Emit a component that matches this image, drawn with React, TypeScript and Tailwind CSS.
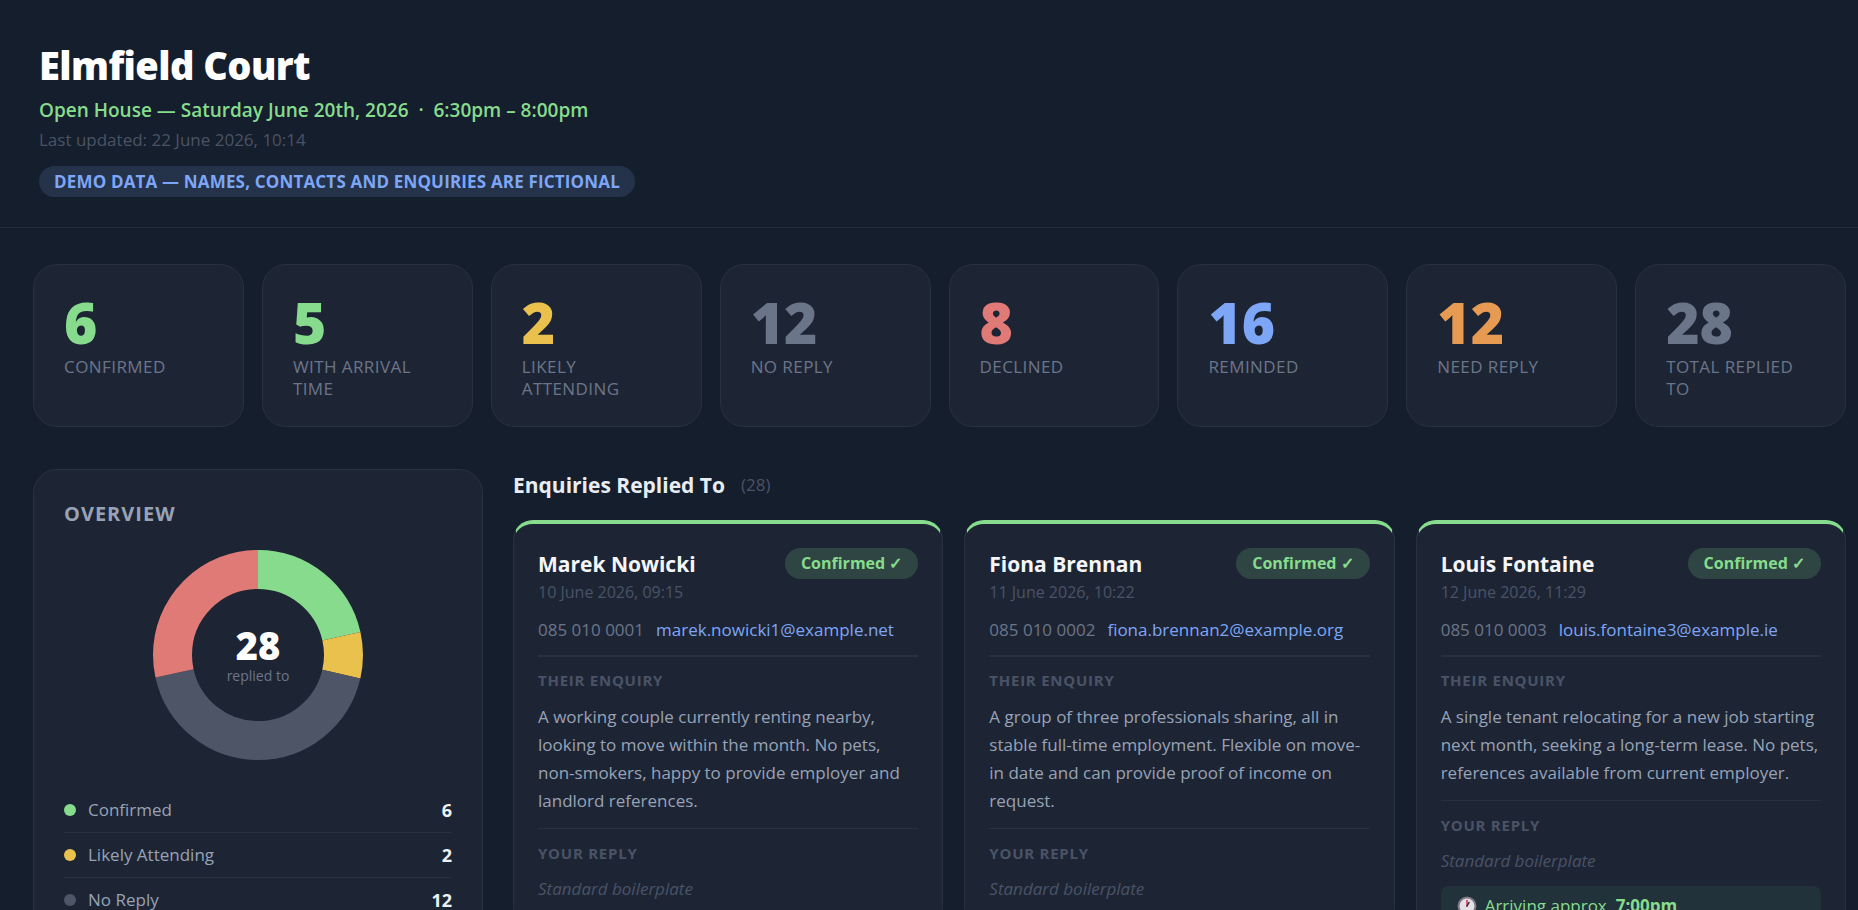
interface Stat {
  value: number;
  label: string;
  color: string;
}

interface Slice {
  label: string;
  count: number;
  color: string;
}

interface Enquiry {
  name: string;
  date: string;
  phone: string;
  email: string;
  message: string;
  arrival?: string;
}

const STATS: Stat[] = [
  { value: 6, label: "Confirmed", color: "text-[#86dc8c]" },
  { value: 5, label: "With arrival time", color: "text-[#86dc8c]" },
  { value: 2, label: "Likely attending", color: "text-[#ebc14e]" },
  { value: 12, label: "No reply", color: "text-[#6b7589]" },
  { value: 8, label: "Declined", color: "text-[#e07a76]" },
  { value: 16, label: "Reminded", color: "text-[#7ea6f6]" },
  { value: 12, label: "Need reply", color: "text-[#e69a52]" },
  { value: 28, label: "Total replied to", color: "text-[#6b7589]" },
];

const SLICES: Slice[] = [
  { label: "Confirmed", count: 6, color: "#86dc8c" },
  { label: "Likely Attending", count: 2, color: "#ebc14e" },
  { label: "No Reply", count: 12, color: "#4e5567" },
  { label: "Declined", count: 8, color: "#e07a76" },
];

const ENQUIRIES: Enquiry[] = [
  {
    name: "Marek Nowicki",
    date: "10 June 2026, 09:15",
    phone: "085 010 0001",
    email: "marek.nowicki1@example.net",
    message:
      "A working couple currently renting nearby, looking to move within the month. No pets, non-smokers, happy to provide employer and landlord references.",
  },
  {
    name: "Fiona Brennan",
    date: "11 June 2026, 10:22",
    phone: "085 010 0002",
    email: "fiona.brennan2@example.org",
    message:
      "A group of three professionals sharing, all in stable full-time employment. Flexible on move-in date and can provide proof of income on request.",
  },
  {
    name: "Louis Fontaine",
    date: "12 June 2026, 11:29",
    phone: "085 010 0003",
    email: "louis.fontaine3@example.ie",
    message:
      "A single tenant relocating for a new job starting next month, seeking a long-term lease. No pets, references available from current employer.",
    arrival: "7:00pm",
  },
];

function StatCard({ stat }: { stat: Stat }) {
  return (
    <div className="rounded-3xl border border-[#283142] bg-[#1d2535] px-[30px] pt-7 pb-[26px]">
      <div className={`text-[57px] leading-[58px] font-extrabold ${stat.color}`}>{stat.value}</div>
      <div className="mt-[5px] text-[17px] leading-[22px] tracking-wide uppercase text-[#6b7589]">{stat.label}</div>
    </div>
  );
}

function Donut({ slices }: { slices: Slice[] }) {
  const total = slices.reduce((sum, s) => sum + s.count, 0);
  const radius = 85.5;
  const length = 2 * Math.PI * radius;
  let start = 0;

  return (
    <div className="relative mx-auto size-[210px]">
      <svg viewBox="0 0 210 210" className="size-full -rotate-90" aria-hidden="true">
        {slices.map((s) => {
          const offset = start;
          start += s.count;
          return (
            <circle
              key={s.label}
              cx="105"
              cy="105"
              r={radius}
              fill="none"
              stroke={s.color}
              strokeWidth="39"
              strokeDasharray={`${(s.count / total) * length} ${length}`}
              strokeDashoffset={-(offset / total) * length}
            />
          );
        })}
      </svg>
      <div className="absolute inset-0 flex flex-col items-center justify-center">
        <span className="text-[38px] leading-[42px] font-extrabold text-white">{total}</span>
        <span className="text-sm text-[#6b7589]">replied to</span>
      </div>
    </div>
  );
}

function Overview() {
  return (
    <aside className="w-[450px] shrink-0 rounded-3xl border border-[#283142] bg-[#1d2535] px-[30px] py-[30px]">
      <h2 className="mb-[22px] text-xl leading-7 font-bold tracking-wider uppercase text-[#98a2b5]">Overview</h2>
      <Donut slices={SLICES} />
      <ul className="mt-7">
        {SLICES.map((s) => (
          <li key={s.label} className="flex h-[45px] items-center gap-3 border-b border-[#283142] text-[17px] last:border-b-0">
            <span className="size-3 rounded-full" style={{ backgroundColor: s.color }} />
            <span className="text-[#98a2b5]">{s.label}</span>
            <span className="ml-auto text-lg font-bold text-[#eef1f6]">{s.count}</span>
          </li>
        ))}
      </ul>
    </aside>
  );
}

function ClockIcon() {
  return (
    <svg viewBox="0 0 20 20" className="size-5" aria-hidden="true">
      <circle cx="10" cy="10" r="8.5" fill="#e4e0e6" stroke="#7d7883" strokeWidth="2" />
      <path d="M10 10V4.5" stroke="#d0395a" strokeWidth="1.5" strokeLinecap="round" />
      <path d="M10 10l2-3.5" stroke="#2c2933" strokeWidth="1.5" strokeLinecap="round" />
    </svg>
  );
}

function EnquiryCard({ enquiry }: { enquiry: Enquiry }) {
  return (
    <article className="rounded-[20px] border border-t-4 border-[#283142] border-t-[#86dc8c] bg-[#1d2535] px-6 pt-6 pb-6">
      <div className="flex items-start justify-between">
        <h3 className="text-[21px] leading-8 font-bold text-[#f4f6fa]">{enquiry.name}</h3>
        <span className="rounded-full bg-[#2f4543] px-4 text-base leading-[31px] font-bold text-[#86dc8c]">Confirmed ✓</span>
      </div>
      <div className="text-base leading-6 text-[#4a5366]">{enquiry.date}</div>
      <div className="mt-[14px] flex gap-3 border-b-2 border-[#283142] pb-[13px] text-[17px] leading-6">
        <span className="text-[#6b7589]">{enquiry.phone}</span>
        <a href={`mailto:${enquiry.email}`} className="text-[#7ea6f6]">{enquiry.email}</a>
      </div>
      <h4 className="mt-[11px] text-[15px] leading-6 font-bold tracking-wider uppercase text-[#4a5366]">Their enquiry</h4>
      <p className="mt-[11px] text-[17px] leading-7 text-[#98a2b5]">{enquiry.message}</p>
      <div className="mt-[13px] border-t border-[#283142] pt-3">
        <h4 className="text-[15px] leading-6 font-bold tracking-wider uppercase text-[#4a5366]">Your reply</h4>
        <p className="mt-3 text-[17px] leading-6 italic text-[#4a5366]">Standard boilerplate</p>
      </div>
      {enquiry.arrival && (
        <div className="mt-[13px] flex items-center gap-2 rounded-lg bg-[#22323a] px-4 py-2 text-[17px] leading-6 text-[#86dc8c]">
          <ClockIcon />
          <span>
            Arriving approx. <strong>{enquiry.arrival}</strong>
          </span>
        </div>
      )}
    </article>
  );
}

export default function App() {
  return (
    <div className="min-h-screen bg-[#151e2c] font-['Open_Sans',sans-serif]">
      <header className="flex flex-col items-start border-b border-[#232c3b] px-[39px] pt-10 pb-[30px]">
        <h1 className="text-[38px] leading-[50px] font-extrabold tracking-[-0.015em] text-white">Elmfield Court</h1>
        <p className="mt-[6px] text-[19px] leading-7 font-semibold whitespace-pre text-[#86dc8c]">
          {"Open House — Saturday June 20th, 2026  ·  6:30pm – 8:00pm"}
        </p>
        <p className="mt-1 text-[17px] leading-6 text-[#4a5366]">Last updated: 22 June 2026, 10:14</p>
        <p className="mt-[14px] rounded-full bg-[#24324a] px-[15px] text-[17px] leading-[31px] font-bold tracking-[0.01em] uppercase text-[#7ea6f6]">
          Demo data — names, contacts and enquiries are fictional
        </p>
      </header>

      <main className="pt-9 pr-3 pb-9 pl-[33px]">
        <section className="grid grid-cols-8 gap-[18px]">
          {STATS.map((s) => (
            <StatCard key={s.label} stat={s} />
          ))}
        </section>

        <div className="mt-[42px] flex items-start gap-[30px]">
          <Overview />
          <section className="min-w-0 flex-1">
            <div className="flex items-center gap-4">
              <h2 className="text-[21px] leading-8 font-bold text-[#e8ecf3]">Enquiries Replied To</h2>
              <span className="text-[17px] text-[#4a5366]">(28)</span>
            </div>
            <div className="mt-[19px] grid grid-cols-3 items-start gap-[21px]">
              {ENQUIRIES.map((e) => (
                <EnquiryCard key={e.email} enquiry={e} />
              ))}
            </div>
          </section>
        </div>
      </main>
    </div>
  );
}
